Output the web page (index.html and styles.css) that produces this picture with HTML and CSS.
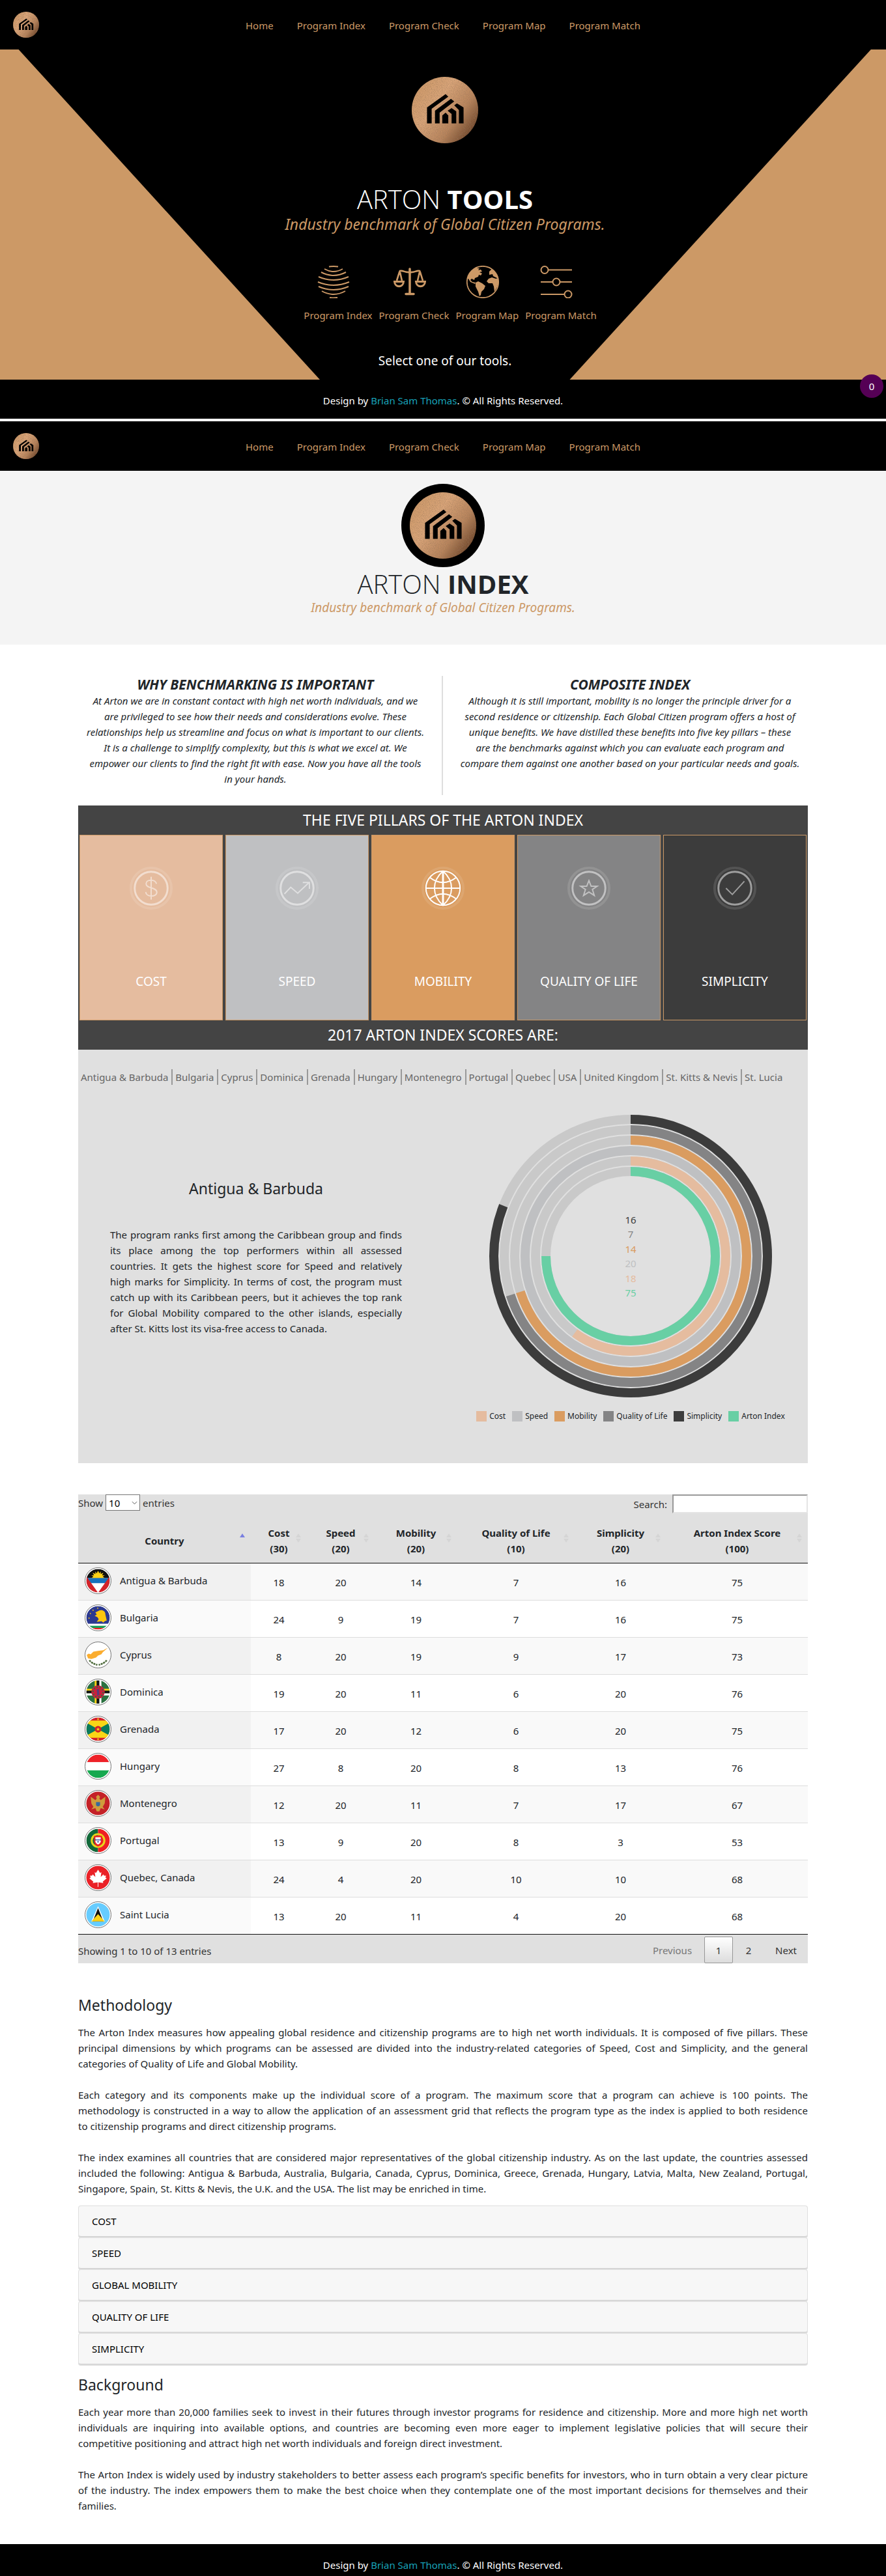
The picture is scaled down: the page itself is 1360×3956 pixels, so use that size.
FILE: index.html
```html
<!DOCTYPE html>
<html lang="en">
<head>
<meta charset="utf-8">
<meta name="viewport" content="width=device-width, initial-scale=1">
<title>Arton Tools</title>
<link rel="stylesheet" href="styles.css">
</head>
<body>
<svg class="defs" aria-hidden="true">
  <defs>
    <linearGradient id="bronze" x1="0.1" y1="0.2" x2="1" y2="0.85">
      <stop offset="0" stop-color="#d19c6c"/><stop offset="0.3" stop-color="#dba67a"/>
      <stop offset="0.65" stop-color="#b8845c"/><stop offset="1" stop-color="#59321a"/>
    </linearGradient>
    <filter id="grain" x="0" y="0" width="100%" height="100%">
      <feTurbulence type="fractalNoise" baseFrequency="0.9" numOctaves="2" seed="4"/>
      <feColorMatrix values="0 0 0 0 0.3  0 0 0 0 0.18  0 0 0 0 0.1  1.4 0 0 0 -0.55"/>
      <feComposite in2="SourceGraphic" operator="in" result="n"/>
      <feMerge><feMergeNode in="SourceGraphic"/><feMergeNode in="n"/></feMerge>
    </filter>
    <clipPath id="disc"><circle cx="20" cy="20" r="17.6"/></clipPath>
    <symbol id="logo" viewBox="0 0 100 100">
      <circle cx="50" cy="50" r="50" fill="url(#bronze)" filter="url(#grain)"/>
      <g fill="#000">
        <path d="M23 70V46L51 26L55 30L30 48V70Z"/>
        <path d="M35 70V51L59 33L64 37L42 54V70Z"/>
        <path d="M46 70V58L51 54L55 58V70Z"/>
        <path d="M54 51L60 47L67 52V70H60V56Z"/>
        <path d="M64 43L68 40L78 46V70H71V50Z"/>
      </g>
    </symbol>
    <symbol id="star" viewBox="0 0 10 10"><path d="M5 0L6.2 3.6H10L7 5.8L8.1 9.5L5 7.2L1.9 9.5L3 5.8L0 3.6H3.8Z"/></symbol>
    <symbol id="ring" viewBox="0 0 40 40"><circle cx="20" cy="20" r="18.4" fill="none" stroke="#fff" stroke-width="1.6"/><circle cx="20" cy="20" r="19.5" fill="none" stroke="#555" stroke-width="0.8"/></symbol>
  </defs>
</svg>

<header class="navbar">
  <a class="brand" href="#" aria-label="Arton"><svg class="brand-logo" aria-hidden="true"><use href="#logo"/></svg></a>
  <nav class="menu" aria-label="Tools">
    <a href="#">Home</a><a href="#">Program Index</a><a href="#">Program Check</a><a href="#">Program Map</a><a href="#">Program Match</a>
  </nav>
</header>

<section class="hero">
  <svg class="hero-logo" aria-hidden="true"><use href="#logo"/></svg>
  <h1 class="title">ARTON <b>TOOLS</b></h1>
  <p class="hero-tagline">Industry benchmark of Global Citizen Programs.</p>
  <ul class="tools">
    <li><a href="#">
      <svg viewBox="0 0 50 50" fill="none" stroke="#cc9966" stroke-width="2">
        <path d="M18 1.5Q25 .5 32 1.5M11 5Q25 13 39 5M6 10Q25 20 44 10M2 17Q25 27 48 17M1 25Q25 35 49 25M2 32Q25 42 48 32M7 39Q25 49 43 39M19 49Q25 50 31 49"/>
      </svg><span>Program Index</span></a></li>
    <li><a href="#">
      <svg viewBox="0 0 50 50" fill="none" stroke="#cc9966" stroke-width="3">
        <path d="M25 5V43M19 43.500H31" stroke-linecap="round" stroke-width="3.500"/>
        <path d="M25 10C17 11 16 7 10 8L9 10L5 23M10 10L13 23M25 10C33 11 34 7 40 8L41 10L45 23M40 10L37 23" stroke-width="2.600"/>
        <path d="M1.500 24.500H15.500C15 34 2 34 1.500 24.500ZM34.500 24.500H48.500C48 34 35 34 34.500 24.500Z"/>
      </svg><span>Program Check</span></a></li>
    <li><a href="#">
      <svg viewBox="0 0 50 50">
        <circle cx="25" cy="25" r="24.200" fill="none" stroke="#cc9966" stroke-width="1.700"/>
        <path fill="#cc9966" d="M4 13C7 7 13 3 19 2L16 4L20 4L18 7L22 6L24 9L20 10L24 12L22 15L19 14L18 17L13 19L12 22L8 20L6 22L9 25L14 26L13 28L6 25L3 20L1 21ZM14 26L18 24L24 27L29 31L27 36L23 40L22 45L20 47L18 40L14 32ZM35 9L39 5L42 7L46 12L49 20L41 16L40 13L35 14ZM34 20L39 18L45 20L49 19V27L47 33L43 40L42 32L40 27H34L31 24Z"/>
      </svg><span>Program Map</span></a></li>
    <li><a href="#">
      <svg viewBox="0 0 50 50" fill="none" stroke="#cc9966" stroke-width="2">
        <circle cx="7" cy="6.500" r="5.500"/><path d="M13 6.500H49M1 25H19M31 25H49M1 44H37"/><circle cx="25" cy="25" r="5.500"/><circle cx="43" cy="44" r="5.500"/>
      </svg><span>Program Match</span></a></li>
  </ul>
  <p class="hero-note">Select one of our tools.</p>
  <button class="counter" type="button">0</button>
</section>
<footer class="footer">Design by <a href="#">Brian Sam Thomas</a>. © All Rights Reserved.</footer>

<header class="navbar navbar-second">
  <a class="brand" href="#" aria-label="Arton"><svg class="brand-logo" aria-hidden="true"><use href="#logo"/></svg></a>
  <nav class="menu" aria-label="Tools">
    <a href="#">Home</a><a href="#">Program Index</a><a href="#">Program Check</a><a href="#">Program Map</a><a href="#">Program Match</a>
  </nav>
</header>

<section class="index-hero">
  <div class="logo-badge"><svg class="hero-logo" aria-hidden="true"><use href="#logo"/></svg></div>
  <h2 class="title">ARTON <b>INDEX</b></h2>
  <p class="index-tagline">Industry benchmark of Global Citizen Programs.</p>
</section>

<main class="container">
  <section class="intro">
    <div class="intro-col">
      <h3>WHY BENCHMARKING IS IMPORTANT</h3>
      <p>At Arton we are in constant contact with high net worth individuals, and we are&nbsp;privileged to see how their needs and considerations evolve. These relationships&nbsp;help us streamline and focus on what is important to our clients. It&nbsp;is&nbsp;a&nbsp;challenge to simplify complexity, but this is what we excel at. We empower&nbsp;our clients to find the right fit with ease. Now you have all the tools in&nbsp;your&nbsp;hands.</p>
    </div>
    <div class="intro-col">
      <h3>COMPOSITE INDEX</h3>
      <p>Although it is still important, mobility is no longer the principle driver for a second&nbsp;residence or citizenship. Each Global Citizen program offers a host of unique&nbsp;benefits. We have distilled these benefits into five key pillars – these are&nbsp;the&nbsp;benchmarks against which you can evaluate each program and compare&nbsp;them against one another based on your particular needs and goals.</p>
    </div>
  </section>

  <section class="scores">
    <h3 class="bar">THE FIVE PILLARS OF THE ARTON INDEX</h3>
    <div class="pillars">
      <a href="#" class="pillar cost">
        <svg viewBox="0 0 70 70" fill="none" stroke="#fff"><circle cx="35" cy="35" r="32" stroke-width="4" opacity=".12"/><g opacity=".5"><circle cx="35" cy="35" r="26" stroke-width="3"/><path d="M35 17V53M43.500 28C42 20.500 27 20.500 27 28C27 36 44 33 44 41.500C44 49.500 27 49.500 26.500 41" stroke-width="2"/></g></svg>
        <span>COST</span></a>
      <a href="#" class="pillar speed">
        <svg viewBox="0 0 70 70" fill="none" stroke="#fff"><circle cx="35" cy="35" r="32" stroke-width="4" opacity=".12"/><g opacity=".5"><circle cx="35" cy="35" r="26" stroke-width="3"/><path d="M15 44L25 33.500L36 43L54 26M44 26H54.500V36" stroke-width="2"/></g></svg>
        <span>SPEED</span></a>
      <a href="#" class="pillar mobility">
        <svg viewBox="0 0 70 70" fill="none" stroke="#fff"><circle cx="35" cy="35" r="32" stroke-width="4" opacity=".1"/><circle cx="35" cy="35" r="27" stroke-width="2"/><path d="M35 8V62" stroke-width="3"/><path d="M8 35H62M35 8C17 24 17 46 35 62C53 46 53 24 35 8M14 18Q35 34 56 18M14 52Q35 36 56 52" stroke-width="2"/></svg>
        <span>MOBILITY</span></a>
      <a href="#" class="pillar quality">
        <svg viewBox="0 0 70 70" fill="none" stroke="#fff"><circle cx="35" cy="35" r="32" stroke-width="4" opacity=".12"/><g opacity=".5"><circle cx="35" cy="35" r="26" stroke-width="3"/><path d="M35 23L38.500 32H48L40.500 37L43.500 46.500L35 41L26.500 46.500L29.500 37L22 32H31.500Z" stroke-width="2"/></g></svg>
        <span>QUALITY OF LIFE</span></a>
      <a href="#" class="pillar simplicity">
        <svg viewBox="0 0 70 70" fill="none" stroke="#fff"><circle cx="35" cy="35" r="32" stroke-width="4" opacity=".12"/><g opacity=".5"><circle cx="35" cy="35" r="26" stroke-width="3"/><path d="M21 35L31 45L50 24" stroke-width="2"/></g></svg>
        <span>SIMPLICITY</span></a>
    </div>
    <h3 class="bar">2017 ARTON INDEX SCORES ARE:</h3>
    <nav class="tabs" aria-label="Countries">
      <a href="#">Antigua &amp; Barbuda</a><a href="#">Bulgaria</a><a href="#">Cyprus</a><a href="#">Dominica</a><a href="#">Grenada</a><a href="#">Hungary</a><a href="#">Montenegro</a><a href="#">Portugal</a><a href="#">Quebec</a><a href="#">USA</a><a href="#">United Kingdom</a><a href="#">St. Kitts &amp; Nevis</a><a href="#">St. Lucia</a>
    </nav>
    <div class="detail">
      <div class="detail-text">
        <h4>Antigua &amp; Barbuda</h4>
        <p>The program ranks first among the Caribbean group and finds its place among the top performers within all assessed countries. It gets the highest score for Speed and relatively high marks for Simplicity. In terms of cost, the program must catch up with its Caribbean peers, but it achieves the top rank for Global Mobility compared to the other islands, especially after St. Kitts lost its visa-free access to Canada.</p>
      </div>
      <div class="chart">
        <svg class="donut" viewBox="0 0 434 434" role="img" aria-label="Scores by pillar">
          <g fill="none" stroke="#c9c9c9" stroke-width="14">
            <circle cx="217" cy="217" r="210"/><circle cx="217" cy="217" r="194"/><circle cx="217" cy="217" r="178"/><circle cx="217" cy="217" r="146"/><circle cx="217" cy="217" r="130"/>
          </g>
          <g fill="none" stroke-width="14" transform="rotate(-90 217 217)">
            <circle cx="217" cy="217" r="210" stroke="#3c3c3c" pathLength="100" stroke-dasharray="81 100"/>
            <circle cx="217" cy="217" r="194" stroke="#848485" pathLength="100" stroke-dasharray="70 100"/>
            <circle cx="217" cy="217" r="178" stroke="#da9c60" pathLength="100" stroke-dasharray="70 100"/>
            <circle cx="217" cy="217" r="162" stroke="#bfc0c2"/>
            <circle cx="217" cy="217" r="146" stroke="#e5bc9f" pathLength="100" stroke-dasharray="60 100"/>
            <circle cx="217" cy="217" r="130" stroke="#68cfa4" pathLength="100" stroke-dasharray="75 100"/>
          </g>
          <g class="values" text-anchor="middle">
            <text x="217" y="167" fill="#3c3c3c">16</text><text x="217" y="189" fill="#848485">7</text><text x="217" y="212" fill="#da9c60">14</text><text x="217" y="234" fill="#bfc0c2">20</text><text x="217" y="257" fill="#e5bc9f">18</text><text x="217" y="279" fill="#68cfa4">75</text>
          </g>
        </svg>
        <ul class="legend">
          <li><i class="cost"></i>Cost</li><li><i class="speed"></i>Speed</li><li><i class="mobility"></i>Mobility</li><li><i class="quality"></i>Quality of Life</li><li><i class="simplicity"></i>Simplicity</li><li><i class="total"></i>Arton Index</li>
        </ul>
      </div>
    </div>
  </section>

  <section class="datatable">
    <div class="controls">
      <label class="length">Show <span class="select-wrap"><select><option>10</option><option>25</option><option>50</option></select><svg viewBox="0 0 10 6" aria-hidden="true"><path d="M1 1L5 5L9 1" fill="none" stroke="#444"/></svg></span> entries</label>
      <label class="search">Search: <input type="search"></label>
    </div>
    <table>
      <colgroup><col class="c1"><col class="c2"><col class="c3"><col class="c4"><col class="c5"><col class="c6"><col class="c7"></colgroup>
      <thead><tr>
        <th class="asc" scope="col">Country</th><th scope="col">Cost<br>(30)</th><th scope="col">Speed<br>(20)</th><th scope="col">Mobility<br>(20)</th><th scope="col">Quality of Life<br>(10)</th><th scope="col">Simplicity<br>(20)</th><th scope="col">Arton Index Score<br>(100)</th>
      </tr></thead>
      <tbody>
        <tr><td><div class="country"><svg viewBox="0 0 40 40"><g clip-path="url(#disc)"><path fill="#111" d="M0 0H40V16H0Z"/><path fill="#fcd116" d="M10 16L13 14L10 12L14 12L12 8L16 10L16 6L18 9L20 5L22 9L24 6L24 10L28 8L26 12L30 12L27 14L30 16Z"/><path fill="#1672bd" d="M0 16H40V24H0Z"/><path fill="#fff" d="M0 24H40V40H0Z"/><path fill="#d2232a" d="M0 10L20 38V40H0ZM40 10L20 38V40H40Z"/></g><use href="#ring"/></svg>Antigua &amp; Barbuda</div></td><td>18</td><td>20</td><td>14</td><td>7</td><td>16</td><td>75</td></tr>
        <tr><td><div class="country"><svg viewBox="0 0 40 40"><g clip-path="url(#disc)"><path fill="#2b3990" d="M0 0H40V29H0Z"/><path fill="#fff" d="M0 29H40V32H0Z"/><path fill="#1ba05a" d="M0 32H40V35H0Z"/><path fill="#ed2024" d="M0 35H40V40H0Z"/><path fill="#fdc70e" d="M20 10C25 7 31 9 31 15L33 24L30 25L28 27L25 25L18 26L21 22L19 19L15 17L18 15L16 12Z"/><g fill="#fdc70e"><use href="#star" x="5" y="19" width="3" height="3"/><use href="#star" x="7" y="12" width="3" height="3"/><use href="#star" x="11" y="7" width="3" height="3"/><use href="#star" x="18" y="4" width="3" height="3"/></g></g><use href="#ring"/></svg>Bulgaria</div></td><td>24</td><td>9</td><td>19</td><td>7</td><td>16</td><td>75</td></tr>
        <tr><td><div class="country"><svg viewBox="0 0 40 40"><circle cx="20" cy="20" r="18" fill="#fff"/><path fill="#fbad2f" d="M3 20L6 18L9 19L13 15L20 14L28 13L35 9L27 16L25 19L20 21L17 24L10 26L5 25Z"/><path fill="none" stroke="#4e6b3c" stroke-width="2.500" stroke-dasharray="3 1" d="M7 28Q11 33 19 35M33 28Q29 33 21 35"/><use href="#ring"/></svg>Cyprus</div></td><td>8</td><td>20</td><td>19</td><td>9</td><td>17</td><td>73</td></tr>
        <tr><td><div class="country"><svg viewBox="0 0 40 40"><g clip-path="url(#disc)"><path fill="#2b7140" d="M0 0H40V40H0Z"/><path fill="#fcd116" d="M15 0H18V40H15ZM0 15H40V18H0Z"/><path fill="#111" d="M18 0H22V40H18ZM0 18H40V22H0Z"/><path fill="#fff" d="M22 0H25V40H22ZM0 22H40V25H0Z"/><circle cx="20" cy="20" r="10" fill="#c8203c"/><circle cx="20" cy="20" r="7.500" fill="none" stroke="#2b7140" stroke-width="2" stroke-dasharray="2 2.700"/><path fill="#573b7c" d="M18 16L21 15L22 24L19 26Z"/></g><use href="#ring"/></svg>Dominica</div></td><td>19</td><td>20</td><td>11</td><td>6</td><td>20</td><td>76</td></tr>
        <tr><td><div class="country"><svg viewBox="0 0 40 40"><g clip-path="url(#disc)"><path fill="#d2202a" d="M0 0H40V40H0Z"/><path fill="#f9d616" d="M0 7H40V33H0Z"/><path fill="#0a7a5c" d="M0 9L20 20L0 31ZM40 9L20 20L40 31Z"/><circle cx="20" cy="20" r="5" fill="#d2202a"/><g fill="#f9d616"><use href="#star" x="17" y="17" width="6" height="6"/><use href="#star" x="18" y="3" width="4" height="4"/><use href="#star" x="18" y="33" width="4" height="4"/></g></g><use href="#ring"/></svg>Grenada</div></td><td>17</td><td>20</td><td>12</td><td>6</td><td>20</td><td>75</td></tr>
        <tr><td><div class="country"><svg viewBox="0 0 40 40"><g clip-path="url(#disc)"><path fill="#ee2229" d="M0 0H40V14H0Z"/><path fill="#fff" d="M0 14H40V26H0Z"/><path fill="#17a84f" d="M0 26H40V40H0Z"/></g><use href="#ring"/></svg>Hungary</div></td><td>27</td><td>8</td><td>20</td><td>8</td><td>13</td><td>76</td></tr>
        <tr><td><div class="country"><svg viewBox="0 0 40 40"><circle cx="20" cy="20" r="18" fill="#c42127"/><path fill="#cf9c3c" d="M20 7L23 10L22 13L24 15L31 10L30 20L27 25L30 29L24 27L22 32H18L16 27L10 29L13 25L10 20L9 10L16 15L18 13L17 10Z"/><path fill="#376a9c" d="M17 18H23V23Q20 26 17 23Z"/><use href="#ring"/></svg>Montenegro</div></td><td>12</td><td>20</td><td>11</td><td>7</td><td>17</td><td>67</td></tr>
        <tr><td><div class="country"><svg viewBox="0 0 40 40"><g clip-path="url(#disc)"><path fill="#12693a" d="M0 0H20V40H0Z"/><path fill="#ee2024" d="M20 0H40V40H20Z"/><circle cx="20" cy="20" r="9.500" fill="none" stroke="#e8d51a" stroke-width="3"/><path fill="#ee2024" d="M14 13H26V22Q25 28 20 29Q15 28 14 22Z"/><path fill="#fff" d="M16 15H24V22Q23 25 20 26Q17 25 16 22Z"/><path fill="none" stroke="#2a3f8f" stroke-width="2" stroke-dasharray="2 1" d="M16 19H24M19 22H21"/></g><use href="#ring"/></svg>Portugal</div></td><td>13</td><td>9</td><td>20</td><td>8</td><td>3</td><td>53</td></tr>
        <tr><td><div class="country"><svg viewBox="0 0 40 40"><circle cx="20" cy="20" r="18" fill="#ea2127"/><path fill="#fff" d="M20 8L23 13L25 12L24 19L28 15L29 17L32 17L31 20L33 21L27 26L28 28L20.500 27V34H19.500V27L12 28L13 26L7 21L9 20L8 17L11 17L12 15L16 19L15 12L17 13Z"/><use href="#ring"/></svg>Quebec, Canada</div></td><td>24</td><td>4</td><td>20</td><td>10</td><td>10</td><td>68</td></tr>
        <tr><td><div class="country"><svg viewBox="0 0 40 40"><circle cx="20" cy="20" r="18" fill="#66ccff"/><path fill="#fff" d="M20 7L30 30H10Z"/><path fill="#111" d="M20 10L28 30H12Z"/><path fill="#fcd116" d="M20 19L30 30H10Z"/><use href="#ring"/></svg>Saint Lucia</div></td><td>13</td><td>20</td><td>11</td><td>4</td><td>20</td><td>68</td></tr>
      </tbody>
    </table>
    <div class="table-footer">
      <p>Showing 1 to 10 of 13 entries</p>
      <div class="pager">
        <button type="button" disabled>Previous</button><button type="button" class="current">1</button><button type="button">2</button><button type="button">Next</button>
      </div>
    </div>
  </section>

  <section class="article">
    <h3>Methodology</h3>
    <p>The Arton Index measures how appealing global residence and citizenship programs are to high net worth individuals. It is composed of five pillars. These principal dimensions by which programs can be assessed are divided into the industry-related categories of Speed, Cost and Simplicity, and the general categories of Quality of Life and Global Mobility.</p>
    <p>Each category and its components make up the individual score of a program. The maximum score that a program can achieve is 100 points. The methodology&nbsp;is constructed in a way to allow the application of an assessment grid that reflects the program type as the index is applied to both residence to&nbsp;citizenship programs and direct citizenship programs.</p>
    <p>The index examines all countries that are considered major representatives of the global citizenship industry. As on the last update, the countries assessed included the following: Antigua &amp; Barbuda, Australia, Bulgaria, Canada, Cyprus, Dominica, Greece, Grenada, Hungary, Latvia, Malta, New Zealand, Portugal, Singapore, Spain, St. Kitts &amp; Nevis, the U.K. and the USA. The list may be enriched in time.</p>
    <div class="accordion">
      <button type="button">COST</button><button type="button">SPEED</button><button type="button">GLOBAL MOBILITY</button><button type="button">QUALITY OF LIFE</button><button type="button">SIMPLICITY</button>
    </div>
    <h3>Background</h3>
    <p>Each year more than 20,000 families seek to invest in their futures through investor programs for residence and citizenship. More and more high net worth individuals are inquiring into available options, and countries are becoming even more eager to implement legislative policies that will secure their competitive&nbsp;positioning and attract high net worth individuals and foreign direct investment.</p>
    <p>The Arton Index is widely used by industry stakeholders to better assess each program’s specific benefits for investors, who in turn obtain a very clear picture of the industry. The index empowers them to make the best choice when they contemplate one of the most important decisions for themselves and their families.</p>
  </section>
</main>
<footer class="footer footer-last">Design by <a href="#">Brian Sam Thomas</a>. © All Rights Reserved.</footer>
</body>
</html>
```
FILE: styles.css
```css
* { box-sizing: border-box; }
body {
  margin: 0;
  background: #fff;
  color: #212529;
  font: 15px/24px "Noto Sans", "Open Sans", sans-serif;
}
h1, h2, h3, h4, p, ul { margin: 0; padding: 0; }
ul { list-style: none; }
a { text-decoration: none; }
svg { display: block; }
button, input, select { font: inherit; color: inherit; }
.defs { position: absolute; width: 0; height: 0; }

.navbar {
  display: grid;
  grid-template-columns: 1fr auto 1fr;
  align-items: center;
  height: 76px;
  padding: 0 20px;
  background: #000;
}
.navbar-second { margin-top: 4px; }
.brand-logo { width: 40px; height: 40px; }
.menu { display: flex; gap: 36px; padding-top: 2px; }
.menu a { color: #cc9966; }

.hero {
  position: relative;
  display: flex;
  flex-direction: column;
  align-items: center;
  height: 507px;
  padding: 42px 0 0 6px;
  background: #cc9966;
}
.hero::before {
  content: "";
  position: absolute;
  inset: 0;
  background: #000;
  clip-path: polygon(2.1% 0, 98.3% 0, 64.3% 100%, 36.1% 100%);
}
.hero > * { position: relative; }
.hero-logo { width: 102px; height: 102px; }
.title { font-family: "Open Sans", sans-serif; font-size: 40px; line-height: 48px; font-weight: 300; }
.title b { font-weight: 700; }
.hero .title { margin-top: 62px; color: #fff; }
.hero-tagline { color: #cc9966; font-size: 23px; line-height: 28px; font-style: italic; }
.tools { display: flex; gap: 10px; margin-top: 50px; padding-left: 16px; }
.tools a { display: grid; justify-items: center; row-gap: 14px; color: #cc9966; }
.tools svg { width: 50px; height: 50px; margin-right: 14px; }
.hero-note { margin-top: 44px; color: #fff; font-size: 19px; line-height: 28px; }
.hero .counter {
  position: absolute;
  right: 4px;
  bottom: -28px;
  z-index: 1;
  width: 36px;
  height: 36px;
  padding: 0;
  border: 0;
  border-radius: 50%;
  background: #550055;
  color: #fff;
}
.footer { height: 60px; padding-top: 20px; background: #000; color: #fff; text-align: center; }
.footer a { color: #17a2b8; }
.footer-last { height: 49px; }

.index-hero {
  display: flex;
  flex-direction: column;
  align-items: center;
  height: 267px;
  padding-top: 20px;
  background: #f4f4f4;
}
.logo-badge { padding: 13px; border-radius: 50%; background: #000; }
.index-hero .title { margin-top: 2px; }
.index-tagline { color: #cc9966; font-size: 19px; line-height: 24px; font-style: italic; }

.container { max-width: 1120px; margin: 0 auto; }
.intro {
  display: grid;
  grid-template-columns: 1fr 1fr;
  margin: 48px 0 16px;
  text-align: center;
  font-style: italic;
}
.intro-col { min-height: 183px; }
.intro-col:first-child { padding-right: 14px; border-right: 2px solid #dedede; }
.intro-col:last-child { padding-left: 14px; }
.intro h3 { font-size: 21px; line-height: 26px; }

.scores { background: #e0e0e0; }
.bar { background: #444; color: #fff; font-size: 23px; line-height: 45px; font-weight: 400; text-align: center; }
.pillars { display: grid; grid-template-columns: repeat(5, 1fr); gap: 4px; padding: 0 2px; background: #444; }
.pillar {
  display: flex;
  flex-direction: column;
  align-items: center;
  justify-content: space-between;
  height: 285px;
  padding: 47px 0;
  border: 1px solid #cc9966;
  color: #fff;
  font-size: 19px;
  line-height: 24px;
}
.pillar svg { width: 68px; height: 68px; }
.cost { background: #e5bc9f; }
.speed { background: #bfc0c2; }
.mobility { background: #da9c60; }
.quality { background: #848485; }
.simplicity { background: #3c3c3c; }
.total { background: #68cfa4; }

.tabs { display: flex; padding: 30px 0 0; }
.tabs a { padding: 0 5px 0 4px; border-right: 2px solid #999; color: #666; white-space: nowrap; }
.tabs a:last-child { border: 0; }
.detail { display: grid; grid-template-columns: 546px 1fr; min-height: 581px; }
.detail-text { padding: 143px 49px 0; }
.detail-text h4 { font-size: 23px; line-height: 32px; font-weight: 400; text-align: center; }
.detail-text p { margin-top: 43px; text-align: justify; }
.chart { display: flex; flex-direction: column; align-items: center; padding: 46px 0 0 30px; }
.donut { width: 434px; height: 434px; }
.values { font-size: 15px; }
.legend { display: flex; gap: 10px; margin-top: 20px; font-size: 12px; line-height: 18px; }
.legend li { display: flex; align-items: center; gap: 4px; }
.legend i { width: 16px; height: 16px; }

.datatable { margin-top: 48px; background: #e0e0e0; color: #333; }
.controls { display: flex; justify-content: space-between; align-items: flex-start; }
.length, .search { display: flex; align-items: center; gap: 4px; }
.select-wrap { position: relative; }
.select-wrap select { width: 53px; height: 25px; padding: 0 4px; border: 1px solid #767676; background: #fff; appearance: none; display: block; color: #000; }
.select-wrap svg { position: absolute; right: 4px; top: 10px; width: 9px; height: 6px; pointer-events: none; }
.search { gap: 8px; }
.search input { width: 208px; height: 29px; border: 2px solid; border-color: #999 #e5e5e5 #e5e5e5 #999; background: #fff; }
table { width: 100%; border-collapse: separate; border-spacing: 0; table-layout: fixed; color: #212529; text-align: center; }
.c1 { width: 265px; } .c2 { width: 86px; } .c3 { width: 104px; } .c4 { width: 127px; } .c5 { width: 180px; } .c6 { width: 141px; }
th { position: relative; height: 77px; padding: 16px 0 8px; border-bottom: 1px solid #111; }
th::before, th::after {
  content: "";
  position: absolute;
  right: 9px;
  border: 4px solid transparent;
}
th::before { top: 27px; border-bottom: 6px solid #d5d5d5; }
th::after { top: 39px; border-top: 6px solid #d5d5d5; }
.asc::before { border-bottom-color: #7a80e0; }
.asc::after { display: none; }
td { height: 57px; padding: 2px 0 0; border-bottom: 1px solid #ddd; background: #fff; }
td:first-child { padding: 0 10px 4px; background: #fafafa; }
tbody tr:nth-child(odd) td { background: #f9f9f9; }
tbody tr:nth-child(odd) td:first-child { background: #f1f1f1; }
tbody tr:last-child td { border-bottom-color: #111; }
.country { display: flex; align-items: center; gap: 13px; }
.country svg { width: 41px; height: 41px; }
.table-footer { display: flex; justify-content: space-between; height: 44px; padding-top: 3px; }
.table-footer p { padding-top: 10px; }
.pager { display: flex; gap: 2px; }
.pager button { height: 41px; min-width: 44px; padding: 0 16px; border: 1px solid transparent; border-radius: 2px; background: none; }
.pager button:disabled { color: #777; }
.pager .current { border-color: #979797; background: linear-gradient(#fff, #dcdcdc); }

.article { padding-bottom: 47px; }
.article h3 { padding-top: 48px; font-size: 23px; line-height: 32px; font-weight: 400; }
.article p { margin-top: 14px; text-align: justify; }
.article p + p { margin-top: 24px; }
.accordion { display: grid; gap: 1px; margin-top: 14px; }
.accordion + h3 { padding-top: 15px; }
.accordion button {
  height: 48px;
  padding: 0 20px;
  border: 1px solid #dfdfdf;
  border-bottom-color: #d0d0d0;
  border-radius: 4px;
  background: #f7f7f7;
  box-shadow: 0 2px 0 #dedede;
  color: #000;
  text-align: left;
}
```
